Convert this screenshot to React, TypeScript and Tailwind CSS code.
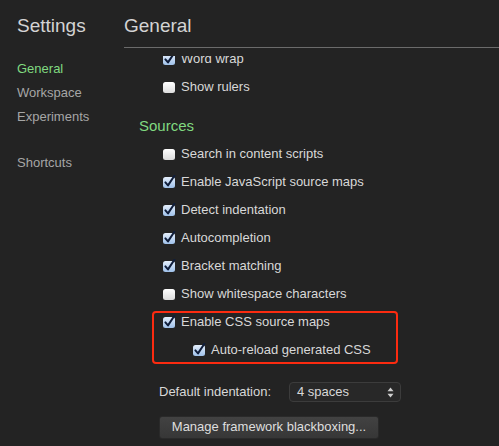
import React from 'react';

const font = { fontFamily: '"Liberation Sans", Arial, sans-serif' };

const Box = ({ checked }: { checked: boolean }) => (
  <svg width="14" height="14" viewBox="0 0 14 14" className="shrink-0 -ml-[1px] mr-[5px]">
    <defs>
      <linearGradient id="cbOn" x1="0" y1="0" x2="0" y2="1">
        <stop offset="0" stopColor="#e4eefb" />
        <stop offset="1" stopColor="#9fc1ea" />
      </linearGradient>
      <linearGradient id="cbOff" x1="0" y1="0" x2="0" y2="1">
        <stop offset="0" stopColor="#ffffff" />
        <stop offset="1" stopColor="#dcdcdc" />
      </linearGradient>
    </defs>
    <rect x="1" y="2" width="12" height="11" rx="2.5" fill={checked ? 'url(#cbOn)' : 'url(#cbOff)'} />
    {checked && (
      <path d="M3.4 7.4 L6 10.4 L12.4 0.8" fill="none" stroke="#0f1d3a" strokeWidth="2" strokeLinecap="round" strokeLinejoin="round" />
    )}
  </svg>
);

const Row = ({ label, checked }: { label: string; checked: boolean }) => (
  <div className="h-[28px] flex items-center text-[13px] leading-[16px] text-[#d8d8d8]">
    <Box checked={checked} />
    <span>{label}</span>
  </div>
);

export default function App() {
  return (
    <div style={font} className="w-[499px] h-[446px] bg-[#232323] flex overflow-hidden">
      {/* sidebar */}
      <aside className="w-[124px] shrink-0 pl-[17px]">
        <div className="h-[47px] pt-[14px] text-[19px] leading-[24px] text-[#d4d4d4]">Settings</div>
        <nav className="pt-[10px] flex flex-col text-[13px] leading-[24px] text-[#a6a6a6]">
          <span className="text-[#80d980]">General</span>
          <span>Workspace</span>
          <span>Experiments</span>
          <span className="mt-[22px]">Shortcuts</span>
        </nav>
      </aside>

      {/* main */}
      <main className="flex-1 flex flex-col min-w-0">
        <div className="h-[48px] pt-[14px] border-b border-[#6b6b6b] text-[19px] leading-[24px] text-[#d4d4d4]">General</div>
        {/* scrolled list, clipped a little below the rule */}
        <div className="flex-1 mt-[8px] overflow-hidden">
          <div className="-mt-[11px] flex flex-col">
            <div className="pl-[39px]">
              <Row label="Word wrap" checked />
              <Row label="Show rulers" checked={false} />
            </div>
            <div className="pl-[15px] mt-[15px] mb-[4px] h-[20px] text-[15px] leading-[20px] text-[#80d980]">Sources</div>
            <div className="pl-[39px]">
              <Row label="Search in content scripts" checked={false} />
              <Row label="Enable JavaScript source maps" checked />
              <Row label="Detect indentation" checked />
              <Row label="Autocompletion" checked />
              <Row label="Bracket matching" checked />
              <Row label="Show whitespace characters" checked={false} />
              <div className="relative">
                <Row label="Enable CSS source maps" checked />
                <div className="pl-[30px]">
                  <Row label="Auto-reload generated CSS" checked />
                </div>
                <div className="absolute left-[-11px] top-[3px] w-[246px] h-[53px] border-2 border-[#fb2b10] rounded-[4px]" />
              </div>
            </div>
            <div className="pl-[35px] mt-[18px] flex items-center text-[13px] leading-[16px] text-[#d8d8d8]">
              <span className="w-[130px]">Default indentation:</span>
              <div className="w-[112px] h-[20px] rounded-[4px] bg-[#282828] border border-[#3c3c3c] flex items-center justify-between pl-[7px] pr-[6px]">
                <span>4 spaces</span>
                <svg width="7" height="11" viewBox="0 0 7 11">
                  <path d="M3.5 0.5 L6.5 4.2 L0.5 4.2 Z" fill="#cfcfcf" />
                  <path d="M3.5 10.5 L6.5 6.8 L0.5 6.8 Z" fill="#cfcfcf" />
                </svg>
              </div>
            </div>
            <div className="pl-[35px] mt-[12px]">
              <button className="w-[220px] h-[23px] rounded-[3px] bg-gradient-to-b from-[#424242] to-[#373737] border border-[#2a2a2a] text-[13px] leading-[16px] text-[#dedede]">
                Manage framework blackboxing...
              </button>
            </div>
          </div>
        </div>
      </main>
    </div>
  );
}
